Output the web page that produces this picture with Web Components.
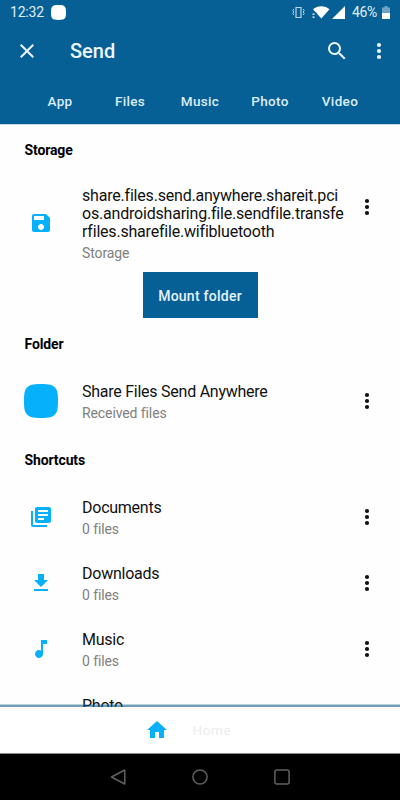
<!DOCTYPE html>
<html lang="en">
<head>
<meta charset="utf-8">
<title>Send</title>
<style>
html,body{margin:0;height:100%;background:#fefefe}
body{font-family:Roboto,"Liberation Sans",sans-serif;color:#111}
</style>
</head>
<body>
<send-app></send-app>
<script>
const define = (name, html, setup) => customElements.define(name, class extends HTMLElement {
  constructor() {
    super();
    const t = document.createElement('template');
    t.innerHTML = html;
    this.attachShadow({mode: 'open'}).append(t.content.cloneNode(true));
  }
  connectedCallback() { if (setup) setup(this, this.shadowRoot); }
});

const ICONS = {
  close: '<path d="M19 6.410 17.590 5 12 10.590 6.410 5 5 6.410 10.590 12 5 17.590 6.410 19 12 13.410 17.590 19 19 17.590 13.410 12z"/>',
  search: '<path d="M15.500 14h-.79l-.28-.27A6.471 6.471 0 0 0 16 9.500 6.500 6.500 0 1 0 9.500 16c1.610 0 3.090-.59 4.230-1.570l.27.28v.79l5 4.990L20.490 19l-4.990-5zm-6 0C7.010 14 5 11.990 5 9.500S7.010 5 9.500 5 14 7.010 14 9.500 11.990 14 9.500 14z"/>',
  more: '<circle cx="12" cy="6" r="2.100"/><circle cx="12" cy="12" r="2.100"/><circle cx="12" cy="18" r="2.100"/>',
  save: '<path d="M17 3H5c-1.110 0-2 .9-2 2v14c0 1.100.89 2 2 2h14c1.100 0 2-.9 2-2V7l-4-4zm-5 16c-1.660 0-3-1.340-3-3s1.340-3 3-3 3 1.340 3 3-1.340 3-3 3zm3-10H5V5h10v4z"/>',
  app: '<path d="M12 0C18 0 20 .6 21.700 2.300S24 6 24 12 23.400 20 21.700 21.700 18 24 12 24 4 23.400 2.300 21.700 0 18 0 12 .6 4 2.300 2.300 6 0 12 0z"/>',
  books: '<path d="M4 6H2v14c0 1.100.9 2 2 2h14v-2H4V6zm16-4H8c-1.100 0-2 .9-2 2v12c0 1.100.9 2 2 2h12c1.100 0 2-.9 2-2V4c0-1.100-.9-2-2-2zm-1 9H9V9h10v2zm-4 4H9v-2h6v2zm4-8H9V5h10v2z"/>',
  download: '<path d="M19 9h-4V3H9v6H5l7 7 7-7zM5 18v2h14v-2H5z"/>',
  music: '<path d="M12 3v10.550c-.59-.34-1.270-.55-2-.55-2.210 0-4 1.790-4 4s1.790 4 4 4 4-1.790 4-4V7h4V3h-6z"/>',
  home: '<path d="M10 20v-6h4v6h5v-8h3L12 3 2 12h3v8z"/>',
  back: '<path d="M18.800 5v14L5.500 12z" fill="none" stroke="currentColor" stroke-width="1.500" stroke-linejoin="round"/>',
  circle: '<circle cx="12" cy="12" r="7.100" fill="none" stroke="currentColor" stroke-width="1.500"/>',
  square: '<rect x="4.900" y="4.900" width="14.200" height="14.200" rx="2" fill="none" stroke="currentColor" stroke-width="1.500"/>'
};
define('ui-icon', `<style>:host{display:block;flex:none;width:var(--s,24px);height:var(--s,24px)}svg{display:block;width:100%;height:100%;fill:currentColor}</style><svg viewBox="0 0 24 24"></svg>`,
  (el, r) => { r.querySelector('svg').innerHTML = ICONS[el.getAttribute('name')] || ''; });

define('status-bar', `<style>
:host{display:flex;height:24px;align-items:center;padding:0 10px 0 10px;font-size:14px;color:#e0eef8;box-sizing:border-box}
.time{letter-spacing:-.2px;margin-right:7px}
.gap{flex:1}
.pct{margin:0 2px 0 7px;letter-spacing:-.3px}
.app{--s:15px;color:#fff}
svg{display:block;flex:none}
</style>
<span class="time">12:32</span><ui-icon class="app" name="app"></ui-icon><span class="gap"></span>
<svg width="13" height="13" viewBox="0 0 13 13" fill="none" stroke="#b9d6ea"><path d="M4 1.500h5v10H4z" stroke-width="1.200"/><path d="M1.800 3 .8 4.500l1 1.500-1 1.500 1 1.500M11.200 3l1 1.500-1 1.500 1 1.500-1 1.500"/></svg>
<svg style="margin-left:7px" width="18" height="14" viewBox="0 0 18 14" fill="#fff"><path d="M1 4.200C5.500.2 13 .2 17.500 4.200L9.300 13.500z"/><path d="M0 7.500h4.500v6H0z" fill="#066095"/><path d="M.5 8.500h2v1.300h-2zM.5 11.500h2v1.300h-2z"/></svg>
<svg style="margin-left:2px" width="13" height="13" viewBox="0 0 13 13" fill="#fff"><path d="M13 0v13H0z"/></svg>
<span class="pct">46%</span>
<svg style="margin-left:3px" width="8" height="13" viewBox="0 0 8 13"><path d="M2.500 0h3v1.500H8V7H0V1.500h2.500z" fill="#6fa3c6"/><path d="M0 7h8v6H0z" fill="#fff"/></svg>`);

define('tool-bar', `<style>
:host{display:flex;height:54px;align-items:center;padding:0 9px 0 15px;color:#eef6fc;box-sizing:border-box}
h1{flex:1;margin:0 0 0 31px;font-weight:500;font-size:20px;line-height:24px}
.m{margin-left:18px}
</style><ui-icon name="close"></ui-icon><h1><slot></slot></h1><ui-icon name="search"></ui-icon><ui-icon class="m" name="more"></ui-icon>`);

define('tab-strip', `<style>
:host{display:grid;grid-template-columns:repeat(5,70px);justify-content:center;height:46px;align-items:center;text-align:center;font-size:13.500px;font-weight:500;letter-spacing:.35px;color:#dcecf7}
</style><slot></slot>`);

define('section-title', `<style>
:host{display:flex;height:50px;align-items:center;padding:2px 24.500px 0;box-sizing:border-box;font-size:14px;font-weight:700;letter-spacing:-.12px;color:#000}
</style><slot></slot>`);

define('list-row', `<style>
:host{display:grid;grid-template-columns:34px 1fr 24px;column-gap:23.500px;height:66px;padding:0 21px 0 24.500px;box-sizing:border-box}
.i{display:flex;justify-content:center;align-items:center;color:#06b0fb;margin:0 .3px 0 -.3px}
.t{padding-top:15px;min-width:0}
.n{font-size:16px;letter-spacing:-.25px;line-height:18px;color:#111;white-space:nowrap}
.s{font-size:14px;letter-spacing:-.1px;line-height:18px;margin-top:3px;color:#808080}
.m{display:flex;height:66px;align-items:center;color:#111}
:host([tall]){height:97.500px}
:host([tall]) .t{padding-top:13px}
:host([tall]) .n{letter-spacing:-.2px}
</style><div class="i"><ui-icon></ui-icon></div><div class="t"><div class="n"><slot></slot></div><div class="s"><slot name="sub"></slot></div></div><div class="m"><ui-icon name="more"></ui-icon></div>`,
  (el, r) => {
    const old = r.querySelector('.i ui-icon'), icon = document.createElement('ui-icon');
    icon.setAttribute('name', el.getAttribute('icon') || '');
    if (el.getAttribute('icon') === 'app') icon.style.setProperty('--s', '34px');
    old.replaceWith(icon);
  });

define('fill-button', `<style>
:host{display:flex;width:115px;height:46.500px;padding-top:1px;box-sizing:border-box;margin:0 auto;align-items:center;justify-content:center;background:#066095;color:#e6f2fa;font-size:14px;font-weight:500;letter-spacing:.25px}
</style><slot></slot>`);

define('home-bar', `<style>
:host{display:flex;position:relative;height:47px;background:#fff;align-items:center;padding-left:145px;font-size:13.500px;letter-spacing:.6px;color:#ececec;flex:none;border-bottom:1px solid #888;box-sizing:border-box}
.line{position:absolute;left:0;right:0;top:-3px;height:3px;background:linear-gradient(#06609548 1px,#0b527f90 1px)}
ui-icon{color:#06b0fb;margin-right:23.500px}
</style><span class="line"></span><ui-icon name="home"></ui-icon><slot></slot>`);

define('nav-bar', `<style>
:host{display:flex;flex:none;height:46px;background:#000;color:#606060;align-items:center;justify-content:center;gap:58px}
</style><ui-icon name="back"></ui-icon><ui-icon name="circle"></ui-icon><ui-icon name="square"></ui-icon>`);

define('send-app', `<style>
:host{display:flex;flex-direction:column;width:400px;height:800px;overflow:hidden}
header{flex:none;height:124px;background:#066095}
main{flex:1;min-height:0;overflow:hidden;border-top:1px solid #c3d8e5;box-sizing:border-box}
section-title:first-child{margin-top:-.6px}
</style>
<header><status-bar></status-bar><tool-bar>Send</tool-bar>
<tab-strip><span>App</span><span>Files</span><span>Music</span><span>Photo</span><span>Video</span></tab-strip></header>
<main>
<section-title>Storage</section-title>
<list-row tall icon="save">share.files.send.anywhere.shareit.pci<br>os.androidsharing.file.sendfile.transfe<br>rfiles.sharefile.wifibluetooth<span slot="sub">Storage</span></list-row>
<fill-button>Mount folder</fill-button>
<section-title>Folder</section-title>
<list-row icon="app">Share Files Send Anywhere<span slot="sub">Received files</span></list-row>
<section-title>Shortcuts</section-title>
<list-row icon="books">Documents<span slot="sub">0 files</span></list-row>
<list-row icon="download">Downloads<span slot="sub">0 files</span></list-row>
<list-row icon="music">Music<span slot="sub">0 files</span></list-row>
<list-row>Photo</list-row>
</main>
<home-bar>Home</home-bar>
<nav-bar></nav-bar>`);
</script>
</body>
</html>
